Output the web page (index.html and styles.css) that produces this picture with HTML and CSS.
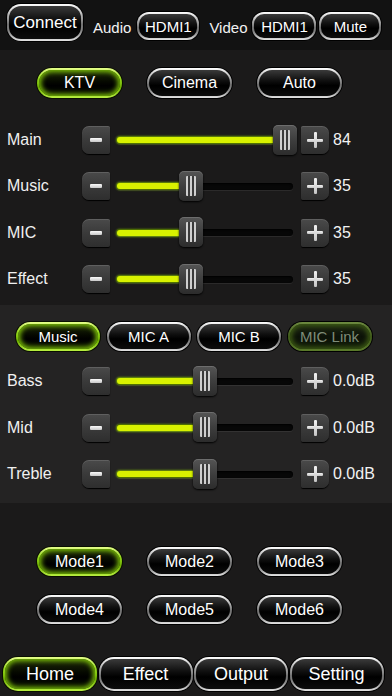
FILE: index.html
```html
<!DOCTYPE html>
<html>
<head>
<meta charset="utf-8">
<link rel="stylesheet" href="styles.css">
</head>
<body>
<div class="app">
  <div class="topbar">
    <button class="btn connect">Connect</button>
    <span class="toplabel audio">Audio</span>
    <button class="btn small hdmi-a">HDMI1</button>
    <span class="toplabel video">Video</span>
    <button class="btn small hdmi-v">HDMI1</button>
    <button class="btn small mute">Mute</button>
  </div>

  <div class="modes3">
    <button class="btn mode active">KTV</button>
    <button class="btn mode">Cinema</button>
    <button class="btn mode">Auto</button>
  </div>

  <div class="sliders">
    <div class="row">
      <span class="label">Main</span>
      <div class="step minus"><span class="bar"></span></div>
      <div class="track" style="--p:1"><div class="groove"></div><div class="fill"></div><div class="thumb"><span class="grip"></span></div></div>
      <div class="step plus"><span class="h"></span><span class="v"></span></div>
      <span class="val">84</span>
    </div>
    <div class="row">
      <span class="label">Music</span>
      <div class="step minus"><span class="bar"></span></div>
      <div class="track" style="--p:0.4"><div class="groove"></div><div class="fill"></div><div class="thumb"><span class="grip"></span></div></div>
      <div class="step plus"><span class="h"></span><span class="v"></span></div>
      <span class="val">35</span>
    </div>
    <div class="row">
      <span class="label">MIC</span>
      <div class="step minus"><span class="bar"></span></div>
      <div class="track" style="--p:0.4"><div class="groove"></div><div class="fill"></div><div class="thumb"><span class="grip"></span></div></div>
      <div class="step plus"><span class="h"></span><span class="v"></span></div>
      <span class="val">35</span>
    </div>
    <div class="row">
      <span class="label">Effect</span>
      <div class="step minus"><span class="bar"></span></div>
      <div class="track" style="--p:0.4"><div class="groove"></div><div class="fill"></div><div class="thumb"><span class="grip"></span></div></div>
      <div class="step plus"><span class="h"></span><span class="v"></span></div>
      <span class="val">35</span>
    </div>
  </div>

  <div class="eq">
    <div class="eqtabs">
      <button class="btn eqbtn active">Music</button>
      <button class="btn eqbtn">MIC A</button>
      <button class="btn eqbtn">MIC B</button>
      <button class="btn eqbtn dim">MIC Link</button>
    </div>
    <div class="row">
      <span class="label">Bass</span>
      <div class="step minus"><span class="bar"></span></div>
      <div class="track" style="--p:0.49"><div class="groove"></div><div class="fill"></div><div class="thumb"><span class="grip"></span></div></div>
      <div class="step plus"><span class="h"></span><span class="v"></span></div>
      <span class="val">0.0dB</span>
    </div>
    <div class="row">
      <span class="label">Mid</span>
      <div class="step minus"><span class="bar"></span></div>
      <div class="track" style="--p:0.49"><div class="groove"></div><div class="fill"></div><div class="thumb"><span class="grip"></span></div></div>
      <div class="step plus"><span class="h"></span><span class="v"></span></div>
      <span class="val">0.0dB</span>
    </div>
    <div class="row">
      <span class="label">Treble</span>
      <div class="step minus"><span class="bar"></span></div>
      <div class="track" style="--p:0.49"><div class="groove"></div><div class="fill"></div><div class="thumb"><span class="grip"></span></div></div>
      <div class="step plus"><span class="h"></span><span class="v"></span></div>
      <span class="val">0.0dB</span>
    </div>
  </div>

  <div class="presets">
    <div class="presetrow">
      <button class="btn preset active">Mode1</button>
      <button class="btn preset">Mode2</button>
      <button class="btn preset">Mode3</button>
    </div>
    <div class="presetrow">
      <button class="btn preset">Mode4</button>
      <button class="btn preset">Mode5</button>
      <button class="btn preset">Mode6</button>
    </div>
  </div>

  <div class="tabs">
    <button class="btn tab active">Home</button>
    <button class="btn tab">Effect</button>
    <button class="btn tab">Output</button>
    <button class="btn tab">Setting</button>
  </div>
</div>
</body>
</html>
```
FILE: styles.css
```css
* { box-sizing: border-box; }
html, body { margin: 0; padding: 0; }
body {
  background: #1b1a1a;
  font-family: "Liberation Sans", Arial, sans-serif;
  color: #f2f2f2;
  width: 392px;
  height: 696px;
  overflow: hidden;
}
.app { width: 392px; height: 696px; display: flex; flex-direction: column; }

.btn {
  font-family: "Liberation Sans", Arial, sans-serif;
  color: #fff;
  font-size: 16px;
  padding: 0;
  border: 2.5px solid transparent;
  border-radius: 999px;
  background:
    linear-gradient(180deg, #3a3a3a 0%, #121212 38%, #000 60%, #0c0c0c 100%) padding-box,
    linear-gradient(180deg, #ffffff 0%, #b4b4b4 30%, #707070 55%, #8a8a8a 75%, #e4e4e4 100%) border-box;
  box-shadow: 0 0 0 1px #000, 0 1px 1px rgba(255,255,255,0.08);
  display: flex;
  align-items: center;
  justify-content: center;
  line-height: 1;
  white-space: nowrap;
}
.btn.active {
  background:
    linear-gradient(180deg, #1e2a08 0%, #050800 45%, #000 60%, #0a1200 100%) padding-box,
    linear-gradient(180deg, #e6ff8a 0%, #94d81c 35%, #6eb000 65%, #b8f040 100%) border-box;
  box-shadow: 0 0 0 1px #0a0f00, inset 0 0 5px 2px #7cc008;
}
.btn.dim {
  color: #7f8c78;
  background:
    linear-gradient(180deg, #1e2814 0%, #0c1208 50%, #101a08 100%) padding-box,
    linear-gradient(180deg, #6d8a40 0%, #3e5a18 50%, #5a7a2a 100%) border-box;
  box-shadow: 0 0 0 1px #000, inset 0 0 5px 2px #3d5a14;
}

/* top bar */
.topbar {
  height: 50px;
  background: #121212;
  display: flex;
  align-items: flex-start;
  padding-left: 7px;
}
.connect { width: 76px; height: 37px; margin-top: 4px; font-size: 17px; border-radius: 14px; }
.toplabel { font-size: 15px; margin-top: 19px; color: #f2f2f2; }
.audio { margin-left: 10px; }
.video { margin-left: 10px; }
.small { height: 28px; margin-top: 12px; font-size: 15px; border-radius: 12px; }
.hdmi-a { width: 62px; margin-left: 6px; }
.hdmi-v { width: 64px; margin-left: 5px; }
.mute { width: 62px; margin-left: 3px; }

/* mode row */
.modes3 {
  display: flex;
  gap: 25px;
  padding-left: 37px;
  margin-top: 18px;
}
.mode { width: 85px; height: 30px; }

/* sliders */
.sliders { margin-top: 19px; }
.row {
  height: 46.33px;
  display: flex;
  align-items: center;
  padding-left: 7px;
}
.label { width: 75px; font-size: 16px; color: #f0f0f0; }
.step {
  width: 28px;
  height: 28px;
  background: linear-gradient(180deg, #4a4a4a 0%, #3a3a3a 50%, #2e2e2e 100%);
  box-shadow: inset 0 1px 0 rgba(255,255,255,0.12), 0 1px 1px #000;
  position: relative;
  display: flex;
  align-items: center;
  justify-content: center;
}
.minus { border-radius: 7px 2px 2px 7px; }
.plus { border-radius: 2px 7px 7px 2px; }
.minus .bar {
  width: 12px; height: 4px; border-radius: 1px;
  background: linear-gradient(180deg, #fafafa, #c8c8c8);
}
.plus .h, .plus .v {
  position: absolute;
  background: linear-gradient(180deg, #f2f2f2, #c4c4c4);
  border-radius: 1px;
}
.plus .h { width: 16px; height: 3px; left: 6px; top: 12.5px; }
.plus .v { width: 3px; height: 16px; left: 12.5px; top: 6px; }

.track {
  position: relative;
  width: 191px;
  height: 29px;
}
.groove {
  position: absolute;
  left: 7px; right: 8px;
  top: 11px;
  height: 7px;
  border-radius: 4px;
  background: #070707;
  box-shadow: inset 0 1px 2px #000, 0 1px 0 rgba(255,255,255,0.07);
}
.fill {
  position: absolute;
  left: 7px;
  top: 11.5px;
  height: 6px;
  width: calc(var(--p) * 156px + 6px);
  border-radius: 3px;
  background: #d8f200;
  box-shadow: 0 0 2px 1px rgba(140, 200, 0, 0.75);
}
.thumb {
  position: absolute;
  top: -1px;
  left: calc(7px + var(--p) * 156px);
  width: 24px;
  height: 30px;
  border-radius: 5px;
  background: linear-gradient(180deg, #555 0%, #3e3e3e 50%, #2c2c2c 100%);
  box-shadow: inset 0 1px 0 rgba(255,255,255,0.15), 0 1px 2px #000;
  display: flex;
  align-items: center;
  justify-content: center;
}
.grip {
  width: 10px;
  height: 20px;
  background: repeating-linear-gradient(90deg, #cfcfcf 0 2px, #3a3a3a 2px 4px);
  border-radius: 1px;
}
.val { margin-left: 4px; font-size: 16px; color: #f2f2f2; }

/* eq panel */
.eq {
  margin-top: 3px;
  background: #242323;
  padding-top: 17px;
  padding-bottom: 6px;
}
.eqtabs {
  display: flex;
  gap: 6.5px;
  padding-left: 16px;
  margin-bottom: 7px;
}
.eqbtn { width: 84px; height: 29px; font-size: 15px; }

/* presets */
.presets {
  margin-top: 44px;
  display: flex;
  flex-direction: column;
  gap: 19px;
}
.presetrow { display: flex; gap: 25px; padding-left: 37px; }
.preset { width: 85px; height: 29px; }

/* tabs */
.tabs {
  margin-top: 33px;
  display: flex;
  gap: 1.5px;
  padding-left: 3px;
}
.tab { width: 94px; height: 34px; font-size: 18px; border-radius: 15px; }
```
